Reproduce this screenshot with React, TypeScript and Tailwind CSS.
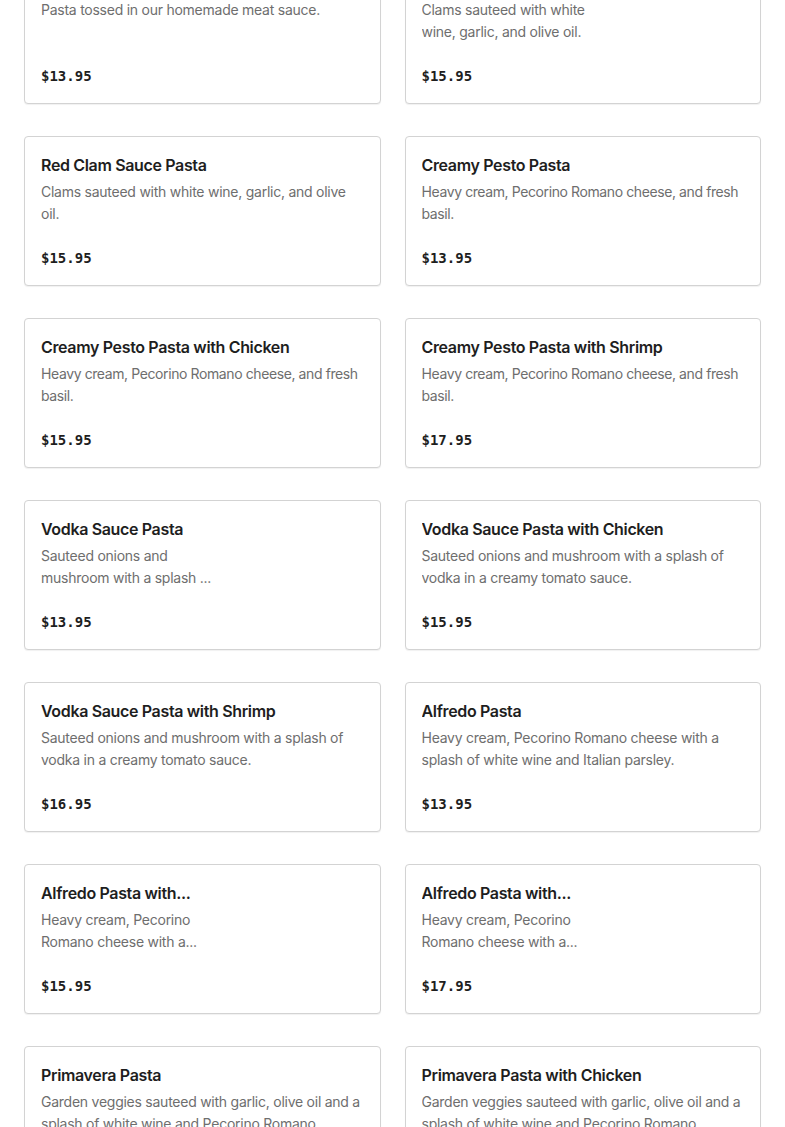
import React from 'react';

interface MenuItem {
    name: string;
    description: string;
    price: string;
    narrow?: boolean;
    tight?: boolean;
}

const items: MenuItem[] = [
    { name: 'Pasta with Meat Sauce', description: 'Pasta tossed in our homemade meat sauce.', price: '$13.95' },
    { name: 'White Clam Sauce Pasta', description: 'Clams sauteed with white wine, garlic, and olive oil.', price: '$15.95', narrow: true },
    { name: 'Red Clam Sauce Pasta', description: 'Clams sauteed with white wine, garlic, and olive oil.', price: '$15.95' },
    { name: 'Creamy Pesto Pasta', description: 'Heavy cream, Pecorino Romano cheese, and fresh basil.', price: '$13.95', tight: true },
    { name: 'Creamy Pesto Pasta with Chicken', description: 'Heavy cream, Pecorino Romano cheese, and fresh basil.', price: '$15.95', tight: true },
    { name: 'Creamy Pesto Pasta with Shrimp', description: 'Heavy cream, Pecorino Romano cheese, and fresh basil.', price: '$17.95', tight: true },
    { name: 'Vodka Sauce Pasta', description: 'Sauteed onions and mushroom with a splash ...', price: '$13.95', narrow: true },
    { name: 'Vodka Sauce Pasta with Chicken', description: 'Sauteed onions and mushroom with a splash of vodka in a creamy tomato sauce.', price: '$15.95' },
    { name: 'Vodka Sauce Pasta with Shrimp', description: 'Sauteed onions and mushroom with a splash of vodka in a creamy tomato sauce.', price: '$16.95' },
    { name: 'Alfredo Pasta', description: 'Heavy cream, Pecorino Romano cheese with a splash of white wine and Italian parsley.', price: '$13.95' },
    { name: 'Alfredo Pasta with...', description: 'Heavy cream, Pecorino Romano cheese with a...', price: '$15.95', narrow: true },
    { name: 'Alfredo Pasta with...', description: 'Heavy cream, Pecorino Romano cheese with a...', price: '$17.95', narrow: true },
    { name: 'Primavera Pasta', description: 'Garden veggies sauteed with garlic, olive oil and a splash of white wine and Pecorino Romano ...', price: '$13.95' },
    { name: 'Primavera Pasta with Chicken', description: 'Garden veggies sauteed with garlic, olive oil and a splash of white wine and Pecorino Romano ...', price: '$15.95' },
];

const MenuCard: React.FC<{ item: MenuItem }> = ({ item }) => (
    <div className="border border-[#d3d3d3] rounded-[4px] bg-white px-4 pt-4 pb-[17px] shadow-[0_1px_1px_rgba(0,0,0,0.06)]">
        <div className={item.narrow ? 'w-[180px]' : ''}>
            <h3 className="text-[16px] leading-6 font-semibold tracking-[-0.35px] text-[#1e1e1e] truncate">{item.name}</h3>
            <p
                className={`mt-1 text-[14px] leading-[22px] text-[#6e6e6e] h-[44px] overflow-hidden ${
                    item.tight ? 'tracking-[-0.4px]' : 'tracking-[-0.25px]'
                }`}
            >
                {item.description}
            </p>
        </div>
        <div className="mt-[23px] text-[14px] leading-5 font-bold text-[#1e1e1e] font-['DejaVu_Sans_Mono',monospace]">{item.price}</div>
    </div>
);

export default function App() {
    return (
        <div className="bg-white min-h-screen font-['Inter',sans-serif] overflow-hidden h-[1127px]">
            <div className="px-6 mt-[-46px] grid grid-cols-2 gap-x-6 gap-y-8">
                {items.map((item, i) => (
                    <MenuCard key={i} item={item} />
                ))}
            </div>
        </div>
    );
}
